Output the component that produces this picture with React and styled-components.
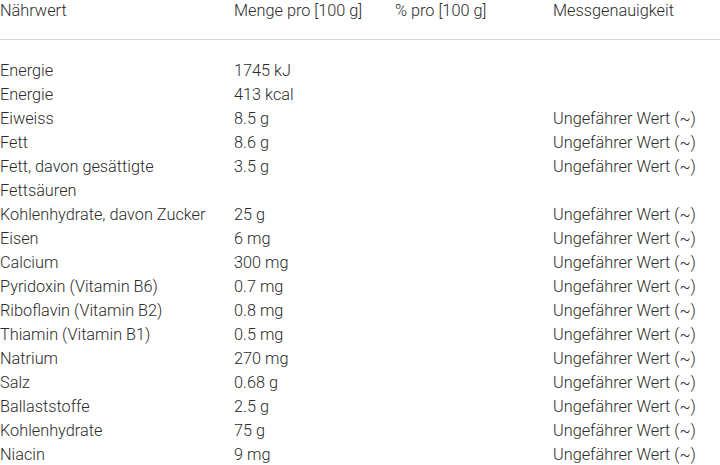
import React from 'react';
import styled, { createGlobalStyle } from 'styled-components';

const GlobalStyle = createGlobalStyle`
  html, body {
    margin: 0;
    padding: 0;
    background: #fff;
  }
  body {
    font-family: Roboto, "Liberation Sans", sans-serif;
    font-weight: 300;
    color: #2b2b2b;
  }
`;

const Table = styled.table`
  width: 720px;
  border-collapse: collapse;
  table-layout: fixed;
  font-size: 16.3px;
  line-height: 24px;
`;

const Col = styled.col`
  width: ${(props) => props.w}px;
`;

const HeadCell = styled.th`
  box-sizing: border-box;
  text-align: left;
  font-weight: 300;
  vertical-align: top;
  padding: 0 12px 17px 0;
  line-height: 22px;
  border-bottom: 1px solid #d6d6d6;
`;

const SpacerRow = styled.tr`
  height: 19px;
`;

const Cell = styled.td`
  box-sizing: border-box;
  padding: 0 12px 0 0;
  vertical-align: top;
`;

const rows = [
  ['Energie', '1745 kJ', ''],
  ['Energie', '413 kcal', ''],
  ['Eiweiss', '8.5 g', 'Ungefährer Wert (~)'],
  ['Fett', '8.6 g', 'Ungefährer Wert (~)'],
  ['Fett, davon gesättigte Fettsäuren', '3.5 g', 'Ungefährer Wert (~)'],
  ['Kohlenhydrate, davon Zucker', '25 g', 'Ungefährer Wert (~)'],
  ['Eisen', '6 mg', 'Ungefährer Wert (~)'],
  ['Calcium', '300 mg', 'Ungefährer Wert (~)'],
  ['Pyridoxin (Vitamin B6)', '0.7 mg', 'Ungefährer Wert (~)'],
  ['Riboflavin (Vitamin B2)', '0.8 mg', 'Ungefährer Wert (~)'],
  ['Thiamin (Vitamin B1)', '0.5 mg', 'Ungefährer Wert (~)'],
  ['Natrium', '270 mg', 'Ungefährer Wert (~)'],
  ['Salz', '0.68 g', 'Ungefährer Wert (~)'],
  ['Ballaststoffe', '2.5 g', 'Ungefährer Wert (~)'],
  ['Kohlenhydrate', '75 g', 'Ungefährer Wert (~)'],
  ['Niacin', '9 mg', 'Ungefährer Wert (~)'],
];

export default function App() {
  return (
    <>
      <GlobalStyle />
      <Table>
        <colgroup>
          <Col w={234} />
          <Col w={161} />
          <Col w={158} />
          <Col w={167} />
        </colgroup>
        <thead>
          <tr>
            <HeadCell>Nährwert</HeadCell>
            <HeadCell>Menge pro [100 g]</HeadCell>
            <HeadCell>% pro [100 g]</HeadCell>
            <HeadCell>Messgenauigkeit</HeadCell>
          </tr>
        </thead>
        <tbody>
          <SpacerRow />
          {rows.map(([name, amount, accuracy], i) => (
            <tr key={i}>
              <Cell>{name}</Cell>
              <Cell>{amount}</Cell>
              <Cell />
              <Cell>{accuracy}</Cell>
            </tr>
          ))}
        </tbody>
      </Table>
    </>
  );
}
